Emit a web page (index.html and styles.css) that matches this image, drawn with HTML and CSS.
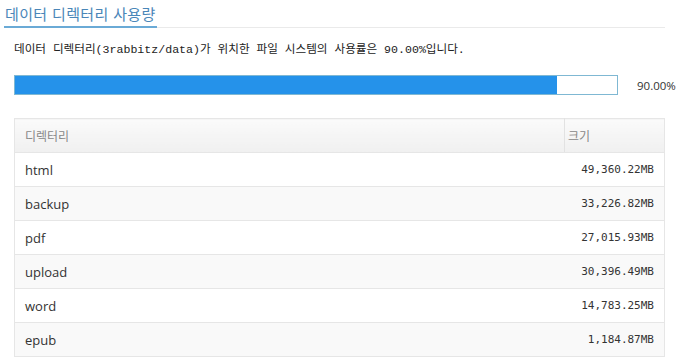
FILE: index.html
```html
<!DOCTYPE html>
<html lang="ko">
<head>
<meta charset="utf-8">
<link rel="stylesheet" href="styles.css">
</head>
<body>
<div class="panel">
  <div class="title-bar"><h2 class="title">데이터 디렉터리 사용량</h2></div>
  <div class="content">
    <p class="desc">데이터 디렉터리(3rabbitz/data)가 위치한 파일 시스템의 사용률은 90.00%입니다.</p>
    <div class="usage">
      <div class="bar"><div class="fill" style="width:90%"></div></div>
      <span class="pct">90.00%</span>
    </div>
    <table class="dirs">
      <thead>
        <tr><th class="c-name">디렉터리</th><th class="c-size">크기</th></tr>
      </thead>
      <tbody>
        <tr><td>html</td><td class="num">49,360.22MB</td></tr>
        <tr><td>backup</td><td class="num">33,226.82MB</td></tr>
        <tr><td>pdf</td><td class="num">27,015.93MB</td></tr>
        <tr><td>upload</td><td class="num">30,396.49MB</td></tr>
        <tr><td>word</td><td class="num">14,783.25MB</td></tr>
        <tr><td>epub</td><td class="num">1,184.87MB</td></tr>
      </tbody>
    </table>
  </div>
</div>
</body>
</html>
```
FILE: styles.css
```css
html, body {
  margin: 0;
  padding: 0;
  background: #fff;
}
body {
  font-family: "Open Sans", "Noto Sans CJK KR", sans-serif;
  color: #333;
}
.panel {
  width: 661px;
  margin-left: 4px;
}
.title-bar {
  border-bottom: 1px solid #eaeaea;
  display: flex;
}
.title {
  margin: 0;
  padding: 4px 1px 3px 1px;
  font-size: 15px;
  font-weight: normal;
  line-height: 19px;
  color: #4a86b8;
  border-bottom: 2px solid #6aaad6;
  margin-bottom: -1px;
  font-family: "Noto Sans CJK KR", sans-serif;
  letter-spacing: 0.35px;
}
.content {
  padding-left: 10px;
}
.desc {
  margin: 14px 0 0 0;
  font-family: "Liberation Mono", "Noto Sans CJK KR", monospace;
  font-size: 11.6px;
  line-height: 16px;
  color: #222;
}
.usage {
  display: flex;
  align-items: center;
  margin-top: 17px;
}
.bar {
  flex: 0 0 auto;
  width: 602px;
  height: 18px;
  border: 1px solid #7fb8d3;
  background: #fff;
}
.fill {
  height: 100%;
  background: #2592ea;
}
.pct {
  margin-left: 19px;
  font-size: 11.5px;
  color: #333;
  white-space: nowrap;
}
.dirs {
  margin-top: 23px;
  width: 651px;
  border-collapse: collapse;
  border: 1px solid #e6e6e6;
  font-size: 13px;
}
.dirs th {
  height: 33px;
  padding: 0 10px;
  text-align: left;
  font-weight: normal;
  font-size: 12px;
  color: #888;
  background: linear-gradient(#fafafa, #f0f0f0);
  border-bottom: 1px solid #e6e6e6;
  font-family: "Noto Sans CJK KR", sans-serif;
}
.dirs th.c-size {
  width: 86px;
  border-left: 1px solid #e2e2e2;
  padding-left: 3px;
}
.dirs td {
  height: 33px;
  padding: 0 10px;
  border-bottom: 1px solid #e6e6e6;
  color: #333;
}
.dirs tbody tr:nth-child(even) td {
  background: #f9f9f9;
}
.dirs td.num {
  text-align: right;
  font-family: "DejaVu Sans Mono", monospace;
  font-size: 11px;
  color: #333;
}
```
